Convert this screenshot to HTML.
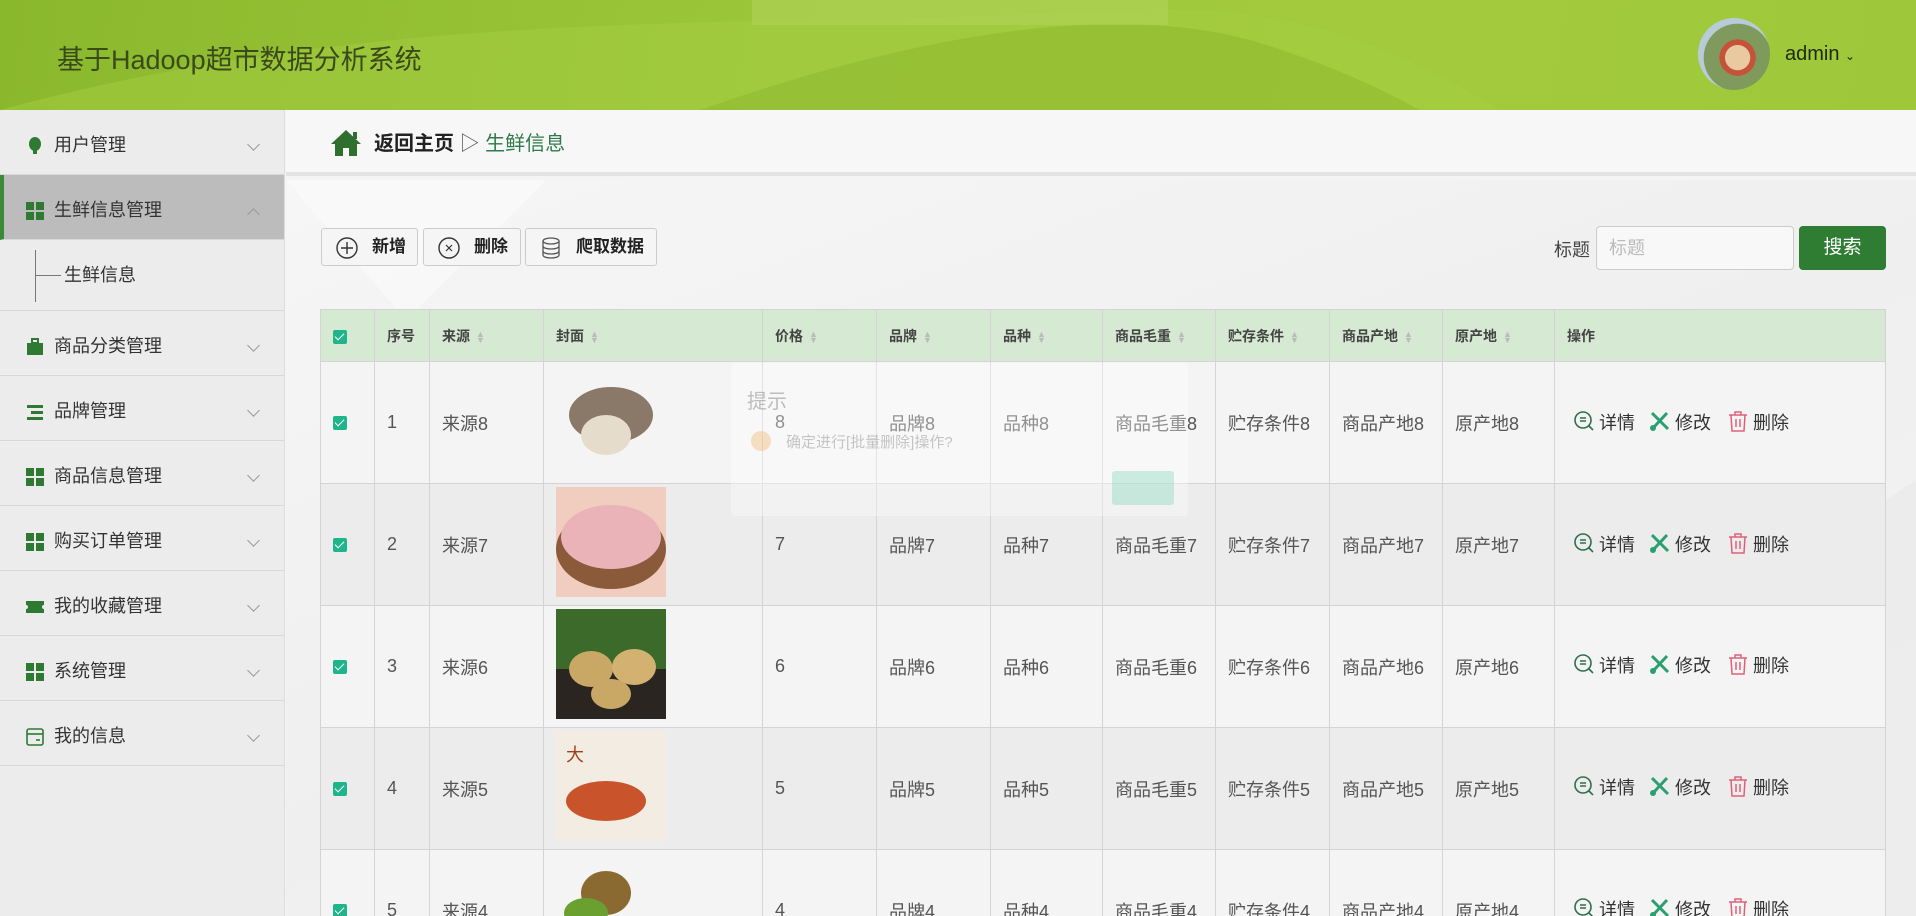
<!DOCTYPE html>
<html><head><meta charset="utf-8">
<style>
*{margin:0;padding:0;box-sizing:border-box}
html{width:1916px;height:916px;overflow:hidden}
body{width:1916px;height:916px;overflow:hidden;background:#f4f4f4;font-family:"Liberation Sans","Noto Sans CJK SC",sans-serif;color:#333;position:relative}
.hdr{position:absolute;left:0;top:0;width:1916px;height:110px;background:linear-gradient(100deg,#8ab82c 0%,#9cc63a 40%,#a3ca3c 70%,#9ec83a 100%);overflow:hidden}
.hdr .t{position:absolute;left:57px;top:38px;font-size:27px;color:#3a4a1a}
.hdr .adm{position:absolute;left:1785px;top:43px;font-size:20px;color:#1e2a0e}
.av{position:absolute;left:1698px;top:18px;width:72px;height:72px;border-radius:50%;background:radial-gradient(circle at 55% 55%,#e8c9a0 0 22%,#c4533a 23% 32%,#7f9a5c 33% 60%,#b8cbd8 61%)}
.side{position:absolute;left:0;top:110px;width:285px;height:806px;background:#ececec;border-right:1px solid #ddd}
.it{height:65px;border-bottom:1px solid #d8d8d8;position:relative;font-size:18px;color:#333;line-height:71px;padding-left:54px}
.it .ic{position:absolute;left:26px;top:27px;width:18px;height:18px}
.it .ch{position:absolute;right:26px;top:30px;width:9px;height:9px;border-right:1.5px solid #999;border-bottom:1.5px solid #999;transform:rotate(45deg)}
.it.act{background:#bcbcbc;border-left:4px solid #3a8a3a;padding-left:50px}
.it.act .ic{left:22px}
.it.act .ch{transform:rotate(-135deg);top:35px}
.sub{height:71px;position:relative;font-size:18px;line-height:71px;padding-left:64px;border-bottom:1px solid #d8d8d8}
.sub:before{content:"";position:absolute;left:35px;top:10px;height:52px;border-left:1px solid #777}
.sub:after{content:"";position:absolute;left:35px;top:35px;width:26px;border-top:1px solid #777}
.grid{background:linear-gradient(#2f7a32,#2f7a32) 0 0/8px 8px no-repeat,linear-gradient(#2f7a32,#2f7a32) 10px 0/8px 8px no-repeat,linear-gradient(#2f7a32,#2f7a32) 0 10px/8px 8px no-repeat,linear-gradient(#2f7a32,#2f7a32) 10px 10px/8px 8px no-repeat}
.bc{position:absolute;left:286px;top:110px;width:1630px;height:66px;background:#f7f7f7;border-bottom:4px solid #e3e3e3}
.main{position:absolute;left:286px;top:180px;width:1630px;height:736px;background:linear-gradient(160deg,#f6f6f6 0%,#efefef 50%,#f5f5f5 100%)}
.btn{position:absolute;top:228px;height:38px;border:1px solid #ccc;border-radius:3px;background:#f5f5f5;font-size:17px;font-weight:bold;line-height:36px;color:#222}
.btn svg{position:absolute;left:14px;top:8px}
.btn span{position:absolute;left:50px}
.clip{position:absolute;left:0;top:0;width:1916px;height:916px;overflow:hidden}
table{position:absolute;left:320px;top:309px;border-collapse:collapse;width:1566px}
td,th{border:1px solid #d4d4d4;text-align:left;padding-left:12px;font-size:18px;color:#555;font-weight:normal}
th{height:52px;background:#d6e9d3;font-size:14px;color:#444;font-weight:bold}
td{height:122px}
tr.a td{background:#f4f4f4}tr.b td{background:#ececec}
.cb{display:inline-block;width:14px;height:14px;background:#1fb58a;border-radius:2px;position:relative;vertical-align:middle}
.cb:after{content:"";position:absolute;left:4px;top:1px;width:4px;height:8px;border:solid #fff;border-width:0 1.5px 1.5px 0;transform:rotate(45deg)}
.srt{display:inline-block;margin-left:6px;color:#bbb;font-size:9px;line-height:6px;vertical-align:middle}
.img{width:110px;height:110px}
.op{font-size:18px;color:#333;white-space:nowrap}
.op i{display:inline-block;vertical-align:-3px;margin-right:4px}
</style></head><body>
<div class="hdr">
<svg width="1916" height="110" style="position:absolute;left:0;top:0"><path d="M0 110 C400 0 800 30 1130 10 C1300 0 1420 60 1500 110 Z" fill="#a6cd42" opacity=".5"/><path d="M700 110 C900 40 1100 0 1250 40 C1350 70 1400 100 1420 110Z" fill="#8cb52c" opacity=".5"/><rect x="752" y="0" width="416" height="25" fill="#b0d25a" opacity=".6"/></svg>
<div class="t">基于Hadoop超市数据分析系统</div>
<div class="av"></div>
<div class="adm">admin <span style="font-size:12px">⌄</span></div>
</div>
<div class="side">
<div class="it"><svg class="ic" viewBox="0 0 18 18"><ellipse cx="9" cy="7" rx="6" ry="7" fill="#2f7a32"/><rect x="7" y="13" width="4" height="4" fill="#2f7a32"/></svg>用户管理<span class="ch"></span></div>
<div class="it act"><div class="ic grid"></div>生鲜信息管理<span class="ch"></span></div>
<div class="sub">生鲜信息</div>
<div class="it"><svg class="ic" viewBox="0 0 18 18"><rect x="1" y="5" width="16" height="12" fill="#2f7a32"/><rect x="6" y="1" width="6" height="4" fill="none" stroke="#2f7a32" stroke-width="2"/></svg>商品分类管理<span class="ch"></span></div>
<div class="it"><svg class="ic" viewBox="0 0 18 18"><rect x="1" y="2" width="16" height="3" fill="#2f7a32"/><rect x="5" y="8" width="12" height="3" fill="#2f7a32"/><rect x="1" y="14" width="16" height="3" fill="#2f7a32"/></svg>品牌管理<span class="ch"></span></div>
<div class="it"><div class="ic grid"></div>商品信息管理<span class="ch"></span></div>
<div class="it"><div class="ic grid"></div>购买订单管理<span class="ch"></span></div>
<div class="it"><svg class="ic" viewBox="0 0 18 18"><path d="M0 3h18v4a2 2 0 0 0 0 4v4H0v-4a2 2 0 0 0 0-4z" fill="#2f7a32"/></svg>我的收藏管理<span class="ch"></span></div>
<div class="it"><div class="ic grid"></div>系统管理<span class="ch"></span></div>
<div class="it"><svg class="ic" viewBox="0 0 18 18"><rect x="1" y="1" width="16" height="16" rx="2" fill="none" stroke="#2f7a32" stroke-width="1.6"/><line x1="1" y1="6" x2="17" y2="6" stroke="#2f7a32" stroke-width="1.6"/><line x1="10" y1="12" x2="14" y2="12" stroke="#2f7a32" stroke-width="1.6"/></svg>我的信息<span class="ch"></span></div>
</div>
<div class="bc">
<svg style="position:absolute;left:44px;top:19px" width="32" height="28" viewBox="0 0 32 28"><path d="M16 1 L31 15 H27 V27 H19 V19 H13 V27 H5 V15 H1 Z" fill="#2f6f2f"/><rect x="23" y="3" width="4" height="7" fill="#2f6f2f"/></svg>
<div style="position:absolute;left:88px;top:17px;font-size:20px;font-weight:bold;color:#222">返回主页 <span style="font-weight:normal;color:#555">▷</span> <span style="font-weight:normal;color:#2f7a4a">生鲜信息</span></div>
</div>
<div class="main"><svg width="1630" height="736"><path d="M0 0 L260 0 L120 140Z" fill="#fff" opacity=".4"/><path d="M1330 500 L1630 300 L1630 736 L1400 736Z" fill="#e9e9e9" opacity=".7"/></svg></div>
<div class="btn" style="left:321px;width:97px"><svg width="22" height="22"><circle cx="11" cy="11" r="10" fill="none" stroke="#333" stroke-width="1.4"/><path d="M11 5v12M5 11h12" stroke="#333" stroke-width="1.4"/></svg><span>新增</span></div>
<div class="btn" style="left:423px;width:98px"><svg width="22" height="22"><circle cx="11" cy="11" r="10" fill="none" stroke="#333" stroke-width="1.4"/><path d="M8 8l6 6M14 8l-6 6" stroke="#333" stroke-width="1.2"/></svg><span>删除</span></div>
<div class="btn" style="left:525px;width:132px"><svg width="22" height="22"><ellipse cx="11" cy="4" rx="8" ry="3" fill="none" stroke="#555" stroke-width="1.3"/><path d="M3 4v14c0 4 16 4 16 0V4M3 9c0 4 16 4 16 0M3 14c0 4 16 4 16 0" fill="none" stroke="#555" stroke-width="1.3"/></svg><span>爬取数据</span></div>
<div style="position:absolute;left:1554px;top:236px;font-size:18px;color:#444">标题</div>
<div style="position:absolute;left:1596px;top:226px;width:198px;height:44px;border:1px solid #ccc;border-radius:4px;background:#f8f8f8;font-size:18px;color:#bbb;line-height:42px;padding-left:12px">标题</div>
<div style="position:absolute;left:1799px;top:226px;width:87px;height:44px;background:#2e7d32;border-radius:4px;color:#fff;font-size:19px;line-height:44px;text-align:center">搜索</div>
<div class="clip">
<table>
<tr><th style="width:54px"><span class="cb"></span></th><th style="width:55px">序号</th><th style="width:114px">来源<span class="srt">▲<br>▼</span></th><th style="width:219px">封面<span class="srt">▲<br>▼</span></th><th style="width:114px">价格<span class="srt">▲<br>▼</span></th><th style="width:114px">品牌<span class="srt">▲<br>▼</span></th><th style="width:112px">品种<span class="srt">▲<br>▼</span></th><th style="width:113px">商品毛重<span class="srt">▲<br>▼</span></th><th style="width:114px">贮存条件<span class="srt">▲<br>▼</span></th><th style="width:113px">商品产地<span class="srt">▲<br>▼</span></th><th style="width:112px">原产地<span class="srt">▲<br>▼</span></th><th>操作</th></tr>
<tr class="a"><td><span class="cb"></span></td><td>1</td><td>来源8</td><td><svg class="img"><ellipse cx="55" cy="50" rx="42" ry="28" fill="#8a7868"/><ellipse cx="50" cy="70" rx="25" ry="20" fill="#e6dccb"/></svg></td><td>8</td><td>品牌8</td><td>品种8</td><td>商品毛重8</td><td>贮存条件8</td><td>商品产地8</td><td>原产地8</td><td class="op"></td></tr>
<tr class="b"><td><span class="cb"></span></td><td>2</td><td>来源7</td><td><svg class="img"><rect width="110" height="110" fill="#f0cdbf"/><ellipse cx="55" cy="62" rx="55" ry="40" fill="#8a5a3a"/><ellipse cx="55" cy="50" rx="50" ry="32" fill="#e9b3b8"/></svg></td><td>7</td><td>品牌7</td><td>品种7</td><td>商品毛重7</td><td>贮存条件7</td><td>商品产地7</td><td>原产地7</td><td class="op"></td></tr>
<tr class="a"><td><span class="cb"></span></td><td>3</td><td>来源6</td><td><svg class="img"><rect width="110" height="110" fill="#3b6a2a"/><rect y="60" width="110" height="50" fill="#2a2520"/><ellipse cx="35" cy="60" rx="22" ry="18" fill="#c9a865"/><ellipse cx="78" cy="58" rx="22" ry="18" fill="#d2b171"/><ellipse cx="55" cy="85" rx="20" ry="15" fill="#c9a865"/></svg></td><td>6</td><td>品牌6</td><td>品种6</td><td>商品毛重6</td><td>贮存条件6</td><td>商品产地6</td><td>原产地6</td><td class="op"></td></tr>
<tr class="b"><td><span class="cb"></span></td><td>4</td><td>来源5</td><td><svg class="img"><rect width="110" height="110" fill="#f3ece2"/><ellipse cx="50" cy="70" rx="40" ry="20" fill="#c9542c"/><text x="10" y="30" font-size="18" fill="#a0401a" font-family="Noto Sans CJK SC">大</text></svg></td><td>5</td><td>品牌5</td><td>品种5</td><td>商品毛重5</td><td>贮存条件5</td><td>商品产地5</td><td>原产地5</td><td class="op"></td></tr>
<tr class="a"><td><span class="cb"></span></td><td>5</td><td>来源4</td><td><svg class="img"><ellipse cx="50" cy="40" rx="25" ry="22" fill="#8a6a30"/><ellipse cx="30" cy="60" rx="22" ry="15" fill="#6aa030"/></svg></td><td>4</td><td>品牌4</td><td>品种4</td><td>商品毛重4</td><td>贮存条件4</td><td>商品产地4</td><td>原产地4</td><td class="op"></td></tr>
</table>
<div id="ops"></div>
</div>
<script>
var y=[421,543,664,786,908];var h='';
y.forEach(function(t){h+='<div class="op" style="position:absolute;left:1573px;top:'+(t-12)+'px">'+
'<i><svg width="22" height="22"><circle cx="10" cy="10" r="8" fill="none" stroke="#2f6f4f" stroke-width="1.6"/><path d="M16 16l4 4M7 8h6M7 11h6" stroke="#2f6f4f" stroke-width="1.6"/></svg></i>详情'+
'<i style="margin-left:14px"><svg width="22" height="22"><path d="M3 3l16 16M18 3L5 17" stroke="#2aa070" stroke-width="3"/><circle cx="4" cy="18" r="3" fill="#2aa070"/></svg></i>修改'+
'<i style="margin-left:16px"><svg width="22" height="22"><path d="M2 5h18M8 5V2h6v3M4 5l1 16h12l1-16M9 9v8M13 9v8" fill="none" stroke="#e0607a" stroke-width="1.5"/></svg></i>删除</div>';});
document.getElementById('ops').innerHTML=h;
</script>
<div style="position:absolute;left:731px;top:363px;width:457px;height:153px;background:rgba(255,255,255,.35);border-radius:4px">
<div style="position:absolute;left:16px;top:22px;font-size:20px;color:rgba(100,100,100,.4)">提示</div>
<div style="position:absolute;left:20px;top:68px;width:20px;height:20px;border-radius:50%;background:rgba(240,160,60,.3)"></div>
<div style="position:absolute;left:55px;top:68px;font-size:15px;color:rgba(100,100,100,.35)">确定进行[批量删除]操作?</div>
<div style="position:absolute;left:381px;top:108px;width:62px;height:34px;background:rgba(120,210,180,.35);border-radius:3px"></div>
</div>
</body></html>
